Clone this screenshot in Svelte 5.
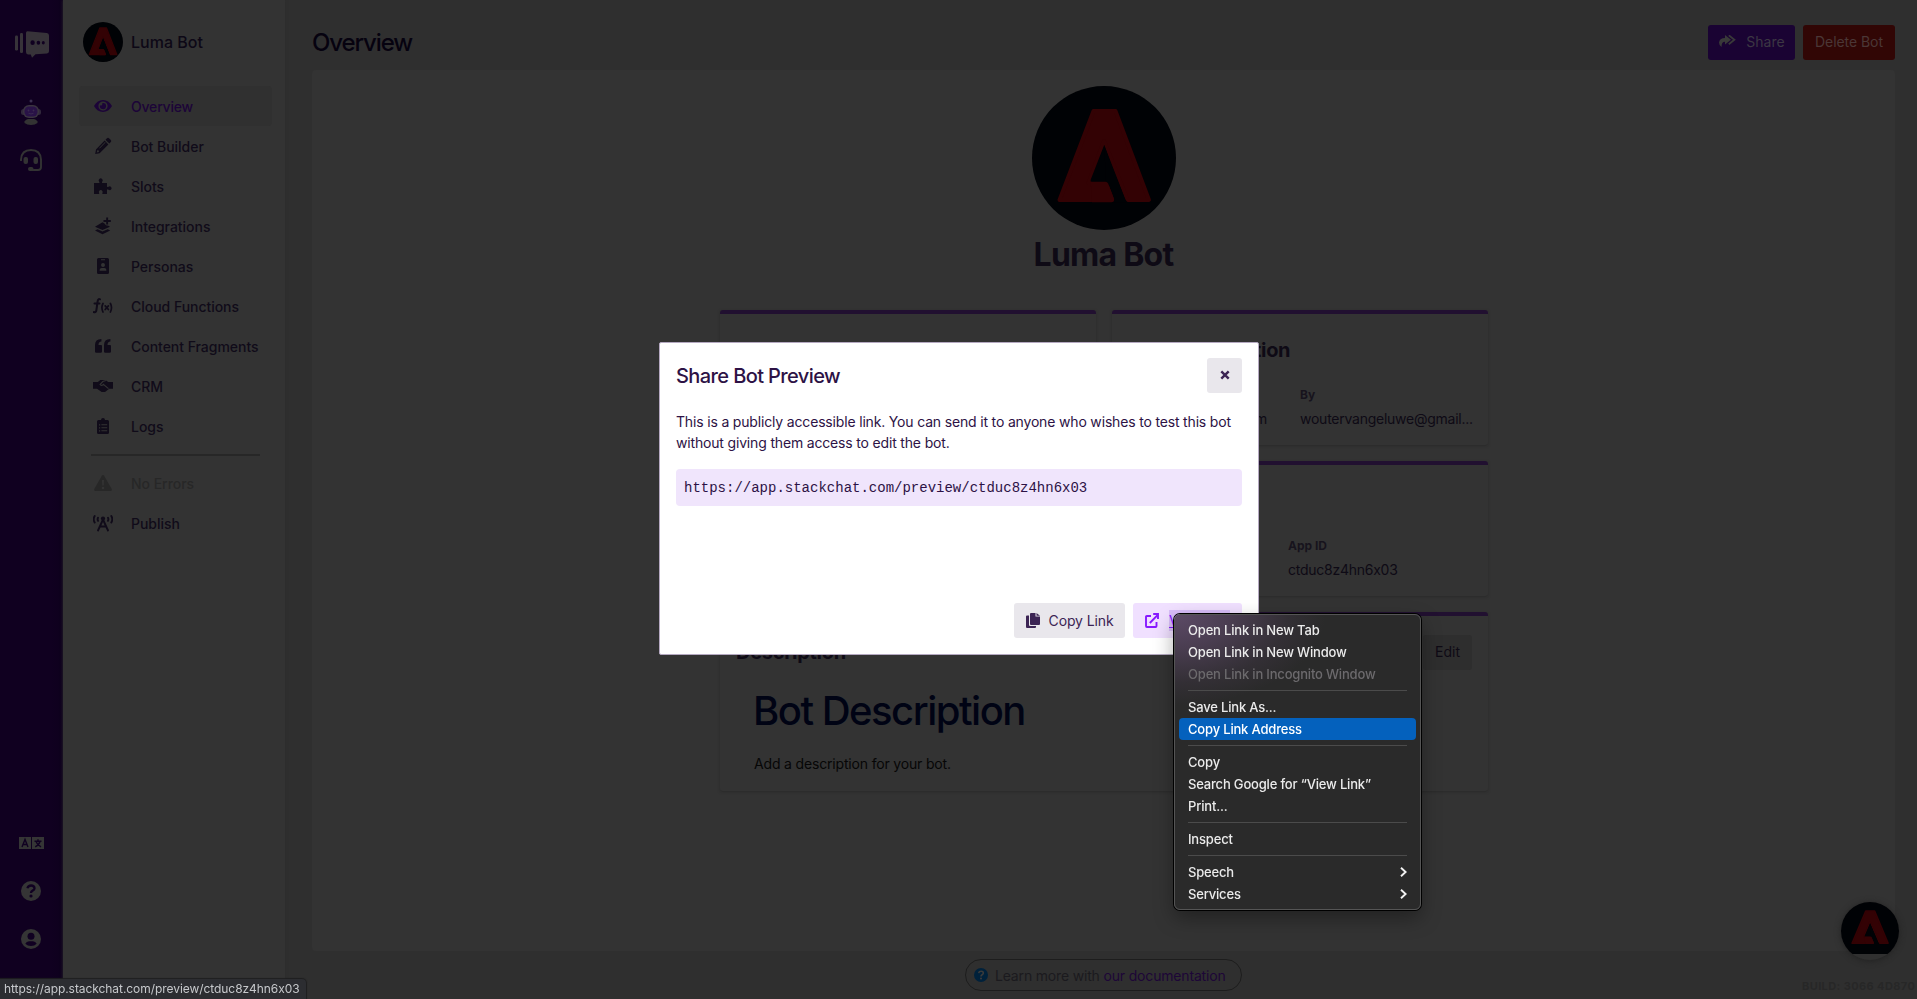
<script>
  const nav = [
    { icon: 'eye', label: 'Overview', active: true },
    { icon: 'pencil', label: 'Bot Builder' },
    { icon: 'puzzle', label: 'Slots' },
    { icon: 'layers', label: 'Integrations' },
    { icon: 'badge', label: 'Personas' },
    { icon: 'fx', label: 'Cloud Functions' },
    { icon: 'quote', label: 'Content Fragments' },
    { icon: 'handshake', label: 'CRM' },
    { icon: 'clipboard', label: 'Logs' }
  ];
  const navBottom = [
    { icon: 'warning', label: 'No Errors', muted: true },
    { icon: 'tower', label: 'Publish' }
  ];
  const menu = [
    [{ t: 'Open Link in New Tab' }, { t: 'Open Link in New Window' }, { t: 'Open Link in Incognito Window', off: true }],
    [{ t: 'Save Link As...' }, { t: 'Copy Link Address', on: true }],
    [{ t: 'Copy' }, { t: 'Search Google for “View Link”' }, { t: 'Print...' }],
    [{ t: 'Inspect' }],
    [{ t: 'Speech', sub: true }, { t: 'Services', sub: true }]
  ];
</script>

{#snippet logo(box, cls)}
  <svg class={cls} viewBox={box} preserveAspectRatio="none">
    <path d="M61.5 25H83.5L117 114H95.5L72 55L56.6 97H74.5L80.5 114H27.5Z" fill="#330204" stroke="#330204" stroke-width="4" stroke-linejoin="round" />
    <path d="M72.2 59L58.6 94Q58.2 95.8 60 96H72L90 109Z" fill="#000205" />
    <path d="M74 96Q75.5 96 76.2 97.6L82 113Q82.6 116 79.6 116.2H96Q94.4 116 93.4 113.6L72.2 59Z" fill="#000205" />
    <path d="M58.7 95.8H73.5Q75.4 96 76.1 97.6L82 112.6Q82.8 116 79.6 116.2H60Z" fill="#330204" />
  </svg>
{/snippet}

{#snippet icon(name)}
  <svg class="ico" viewBox="0 0 20 20" fill="currentColor">
    {#if name === 'eye'}
      <path fill-rule="evenodd" d="M1 10C3 6.200 6.300 4 10 4s7 2.200 9 6c-2 3.800-5.300 6-9 6s-7-2.200-9-6ZM10 5.400a4.600 4.600 0 1 0 0 9.200a4.600 4.600 0 0 0 0-9.200ZM10 6.900a3.100 3.100 0 1 1-3 2.300a1.600 1.600 0 0 0 2.200-2.200a3 3 0 0 1 .8-.1Z" />
    {:else if name === 'pencil'}
      <path fill-rule="evenodd" d="M11.600 4.600L15.400 8.400L6.600 17.200L2.200 18L3 13.600ZM4.200 14.300L3.800 16.400L5.900 16L5.800 14.500ZM12 6.100L6.200 11.900l.5.5l5.800-5.800Z" />
      <path d="M12.500 3.700l1.500-1.500q1-.9 2 0l1.800 1.800q.9 1 0 2l-1.500 1.500Z" />
    {:else if name === 'puzzle'}
      <path d="M1 7H6.300Q6.800 6.700 6.200 5.700A2 2 0 1 1 9.200 5.700Q8.600 6.700 9.200 7H14V10.500Q14.400 11.500 15.500 10.700A1.900 1.900 0 1 1 15.500 13.700Q14.400 12.900 14 13.900V18H9.500Q9 17.600 9.500 16.700A1.900 1.900 0 1 0 6 16.700Q6.600 17.600 6 18H1Z" />
    {:else if name === 'layers'}
      <path d="M2 10.700L9.500 6.300L11.500 7.400Q12.500 9.600 15.400 9.700L17 10.700L9.500 14Z" />
      <path d="M2 14.500L4.500 13.200L9.500 15.400L14.700 13.200L17.200 14.500L9.500 18.200Z" />
      <path d="M13.200 1.500h1.900v2.600h2.700v1.900h-2.700v2.600h-1.900V6h-2.700V4.100h2.700Z" />
    {:else if name === 'badge'}
      <path fill-rule="evenodd" d="M5.500 2h9Q16 2 16 3.500v13Q16 18 14.500 18h-9Q4 18 4 16.500v-13Q4 2 5.500 2ZM8 3.300v1h4v-1ZM10 7a2 2 0 1 0 0 4a2 2 0 0 0 0-4ZM6.600 14.800h6.800q0-2.800-2-2.800H8.600q-2 0-2 2.800Z" />
    {:else if name === 'fx'}
      <g fill="none" stroke="currentColor" stroke-width="2" stroke-linecap="round">
        <path d="M.8 16Q3 17 3.400 14L4.600 5.500Q5 2.400 7 3.300M1.500 7.600H6.500" />
        <path d="M10 7.500Q7.800 11.500 10 16M17.400 7.500Q19.600 11.500 17.400 16M12.200 9.900l3.200 3.600M15.400 9.900l-3.200 3.600" stroke-width="1.700" />
      </g>
    {:else if name === 'quote'}
      <path d="M8.400 3v2.500Q5.500 5.500 5.500 9H8q1 0 1 1v5.500q0 1.300-1.300 1.300H3.300Q2 16.800 2 15.500V9Q2 3 8.400 3Z" />
      <path d="M17.400 3v2.500Q14.500 5.500 14.500 9H17q1 0 1 1v5.500q0 1.300-1.300 1.300h-4.400Q11 16.800 11 15.500V9Q11 3 17.400 3Z" />
    {:else if name === 'handshake'}
      <path d="M0 6h4.800l2.600-2h5l2.800 2H20v6.700h-3.800L12 16H8.700L4 12.700H0Z" />
      <path d="M12.900 4.500L9.800 5.500L7 8.500Q8.300 10.300 10.300 8.300L15.500 12.600" fill="none" stroke="#333" stroke-width="1.100" />
    {:else if name === 'clipboard'}
      <path fill-rule="evenodd" d="M5.500 4H8Q8 2 10 2t2 2h2.500Q16 4 16 5.500v11q0 1.500-1.500 1.500h-9Q4 18 4 16.500v-11Q4 4 5.500 4ZM6 8.200v1.200h1.200V8.200ZM8.400 8.200v1h5.800v-1ZM6 11.200v1.200h1.200v-1.200ZM8.400 11.300v1h5.800v-1ZM6 14.200v1.200h1.200v-1.200ZM8.400 14.300v1h5.800v-1Z" />
    {:else if name === 'warning'}
      <path fill-rule="evenodd" d="M8.900 2.700q1.100-1.600 2.200 0l7.600 13.200q.8 2-1.200 2.100h-15q-2-.1-1.200-2.100ZM9 7l.3 5.500h1.400L11 7ZM10 13.700a1.300 1.300 0 1 0 0 2.600a1.300 1.300 0 0 0 0-2.600Z" />
    {:else if name === 'tower'}
      <g fill="none" stroke="currentColor" stroke-width="1.900" stroke-linecap="round">
        <path d="M5 17.500L10 6.500L15 17.500M6.800 13.500H13.200" />
        <path d="M1.700 3Q-.3 6.200 1.700 9.500M18.300 3Q20.300 6.200 18.300 9.500M5 4.800Q4.200 6.300 5 7.800M15 4.800Q15.800 6.300 15 7.800" />
      </g>
      <circle cx="10" cy="5.500" r="2.100" />
    {/if}
  </svg>
{/snippet}

<div class="app">
  <aside class="rail">
    <svg class="brand" width="34" height="27" viewBox="0 0 34 27" fill="#373339">
      <rect x="0" y="4.500" width="3" height="15" rx="1.200" />
      <rect x="5" y="2" width="3" height="20" rx="1.200" />
      <path fill-rule="evenodd" d="M12.500.2L31.800 2Q34 2.300 34 4.500v15.700Q34 22.200 32 22.500L20.500 23.200L17 26.700L15.800 23.600L13 23.400Q11 23.200 11 21V2Q11 .1 12.500.2ZM17.600 9.300a2.200 2.400 0 1 0 0 4.800a2.200 2.400 0 0 0 0-4.800ZM23.400 9.800a1.800 2 0 1 0 0 4a1.800 2 0 0 0 0-4ZM28.300 10a1.500 1.800 0 1 0 0 3.600a1.500 1.800 0 0 0 0-3.600Z" />
    </svg>
    <svg class="bot" width="20" height="27" viewBox="0 0 20 27">
      <circle cx="10" cy="2" r="1.500" fill="#3b3050" />
      <rect x="0" y="10" width="20" height="6" rx="2.500" fill="#31283b" />
      <rect x="2" y="6" width="16" height="13" rx="6" fill="#3a343f" />
      <rect x="3.500" y="7.500" width="13" height="10" rx="4.500" fill="#291247" />
      <circle cx="7.500" cy="11.500" r=".9" fill="#3a2a50" /><circle cx="12.500" cy="11.500" r=".9" fill="#3a2a50" />
      <path d="M7.500 14.300q2.500 1.300 5 0" fill="none" stroke="#3a2a50" />
      <path d="M3.500 22.500Q5 20 7 20h6q2 0 3.500 2.500v1.500Q14 26 10 26T3.500 24Z" fill="#333333" />
    </svg>
    <svg class="headset" width="22" height="22" viewBox="0 0 22 22">
      <path d="M1 12V10.500Q1.500 1 11 1T21 10.500V18Q21 21 18 21H11" fill="none" stroke="#333" stroke-width="1.900" />
      <rect x="3.500" y="8" width="4.500" height="7" rx="2" fill="#333" /><rect x="13.500" y="8" width="4.500" height="7" rx="2" fill="#333" />
      <rect x="8" y="18" width="5.500" height="4" rx="2" fill="#333" />
    </svg>
    <div class="railBottom">
      <svg width="25" height="12" viewBox="0 0 25 12">
        <rect width="12" height="12" fill="#353535" /><rect x="13" width="12" height="12" fill="#353535" />
        <path d="M3 10L6 2.500L9 10M4 7.500h4M15.500 4.200h7M19 2.200v2M21 4.500Q19.800 8.300 16.200 9.800M17.200 5Q18.300 8 22 9.800" fill="none" stroke="#100021" stroke-width="1.400" />
      </svg>
      <svg width="20" height="20" viewBox="0 0 20 20">
        <circle cx="10" cy="10" r="10" fill="#353535" />
        <path d="M6.400 7.300Q7.200 4.500 10.200 4.500T13.500 7.200Q13.500 8.700 11.600 9.600Q10 10.400 10 12" fill="none" stroke="#100021" stroke-width="2.300" />
        <circle cx="10" cy="15" r="1.600" fill="#100021" />
      </svg>
      <svg width="20" height="20" viewBox="0 0 20 20">
        <circle cx="10" cy="10" r="10" fill="#353535" />
        <circle cx="10" cy="7.200" r="3.500" fill="#100021" />
        <path d="M4.300 14.700Q5.500 12.200 8 12.200h4q2.500 0 3.700 2.500Q13.500 17 10 17t-5.700-2.300Z" fill="#100021" />
      </svg>
    </div>
  </aside>

  <nav class="side">
    <div class="who">
      <div class="avatar small">{@render logo('7 5 130 134', 'fill')}</div>
      <span>Luma Bot</span>
    </div>
    {#each nav as n}
      <div class="item" class:active={n.active}>{@render icon(n.icon)}<span>{n.label}</span></div>
    {/each}
    <hr />
    {#each navBottom as n}
      <div class="item" class:muted={n.muted}>{@render icon(n.icon)}<span>{n.label}</span></div>
    {/each}
  </nav>

  <main>
    <header>
      <h1>Overview</h1>
      <div class="actions">
        <button class="share">
          <svg width="17" height="13" viewBox="0 0 17 13" fill="#393939">
            <path d="M6 0L12 4.700L6 9.500V6.700Q2.500 6.600 2.500 12Q0 10.500 0 7.500Q.3 3 6 2.900Z" />
            <path d="M9.800.3L15.400 4.800L9.800 9.300" fill="none" stroke="#393939" stroke-width="1.800" />
          </svg>
          Share
        </button>
        <button class="delete">Delete Bot</button>
      </div>
    </header>

    <section class="panel">
      <div class="avatar big">{@render logo('0 0 144 144', 'fill')}</div>
      <h2>Luma Bot</h2>
      <div class="cards">
        <div class="card"></div>
        <div class="card">
          <h3 class="pubTitle">Last Publication</h3>
          <div class="cols">
            <div><p class="end">pm</p></div>
            <div><b>By</b><p>woutervangeluwe@gmail...</p></div>
          </div>
        </div>
        <div class="card wide ids">
          <div><b>App ID</b><p>ctduc8z4hn6x03</p></div>
        </div>
        <div class="card wide desc">
          <div class="descHead"><h3>Description</h3><button class="edit">Edit</button></div>
          <h4>Bot Description</h4>
          <p>Add a description for your bot.</p>
        </div>
      </div>
    </section>

    <footer>
      <div class="pill">
        <svg width="14" height="14" viewBox="0 0 20 20">
          <circle cx="10" cy="10" r="10" fill="#00213b" />
          <path d="M6.600 7.300Q7.200 4.700 10.200 4.700T13.400 7.200Q13.400 8.700 11.600 9.600Q10 10.400 10 12" fill="none" stroke="#3b3b3b" stroke-width="2.200" />
          <circle cx="10" cy="15" r="1.500" fill="#3b3b3b" />
        </svg>
        <span>Learn more with <a href="#docs">our documentation</a></span>
      </div>
    </footer>
  </main>
</div>

<div class="build">BUILD: 3066 4D870</div>
<div class="widget">{@render logo('0 0 144 144', 'widgetArt')}</div>

<div class="backdrop">
  <div class="modal">
    <div class="modalHead">
      <h5>Share Bot Preview</h5>
      <button class="close" aria-label="Close">
        <svg width="10" height="10" viewBox="0 0 10 10"><path d="M1.300 1.300L8.700 8.700M8.700 1.300L1.300 8.700" stroke="#3c2454" stroke-width="2.400" /></svg>
      </button>
    </div>
    <p>This is a publicly accessible link. You can send it to anyone who wishes to test this bot without giving them access to edit the bot.</p>
    <code>https://app.stackchat.com/preview/ctduc8z4hn6x03</code>
    <div class="modalFoot">
      <button class="copy">
        <svg width="14" height="15" viewBox="0 0 14 15" fill="#3c2454">
          <path d="M5 0h4.500v3.500H14V11q0 1-1 1H5q-1 0-1-1V1q0-1 1-1Z" /><path d="M10.500 0L14 2.700H10.500Z" />
          <path d="M0 3.500Q0 2.500 1 2.500h2V12q0 1 1 1h6v1q0 1-1 1H1q-1 0-1-1Z" />
        </svg>
        Copy Link
      </button>
      <button class="view">
        <svg width="14" height="15" viewBox="0 0 14 15" fill="none" stroke="#8719ff" stroke-width="1.900">
          <path d="M6 3H1.900Q1 3 1 3.900V13q0 1 .9 1H10.600q.9 0 .9-1V9M4.800 10L12.300 2.300" /><path d="M8.200 1H13V6" />
        </svg>
        <span>View Link</span>
      </button>
    </div>
  </div>
</div>

<div class="ctx">
  {#each menu as group}
    <div class="group">
      {#each group as m}
        <div class="row" class:off={m.off} class:on={m.on}>
          {m.t}
          {#if m.sub}<svg width="7" height="10" viewBox="0 0 7 10"><path d="M1 .8L5.600 5L1 9.200" fill="none" stroke="#f2f2f2" stroke-width="1.900" /></svg>{/if}
        </div>
      {/each}
    </div>
  {/each}
</div>

<div class="status">https://app.stackchat.com/preview/ctduc8z4hn6x03</div>

<style>
  :global(body) { background: #2f2f2f; font-family: Inter, sans-serif; font-size: 14px; font-feature-settings: "calt" 0; overflow: hidden; }
  * { box-sizing: border-box; }
  h1, h2, h3, h4, h5, p { margin: 0; }
  button { border: 0; font: inherit; height: 35px; border-radius: 3px; padding: 0 0 2px; display: flex; align-items: center; justify-content: center; }
  .app { display: flex; height: 999px; width: 1917px; }

  .rail { width: 63px; flex: none; background: linear-gradient(90deg, #100020 80%, #0e001d); display: flex; flex-direction: column; align-items: center; padding: 31px 2px 50px 0; }
  .brand { margin-left: 2px; }
  .bot { margin-top: 41px; }
  .headset { margin-top: 23px; }
  .railBottom { margin-top: auto; display: flex; flex-direction: column; align-items: center; gap: 28px; }
  .railBottom svg:first-child { margin: 0 0 4px 2px; }

  .side { width: 222px; flex: none; background: #333; padding: 22px 13px 0 16px; margin-right: 1px; box-shadow: 0 0 3px #2c2c2c; }
  .who { display: flex; align-items: center; gap: 8px; padding-left: 4px; margin-bottom: 24px; height: 40px; font-size: 16px; font-weight: 500; color: #0d0816; }
  .avatar { border-radius: 50%; background: #000205; overflow: hidden; }
  .small { width: 40px; height: 40px; }
  .big { width: 144px; height: 144px; }
  :global(svg.fill) { display: block; width: 100%; height: 100%; }
  .item { height: 40px; border-radius: 4px; display: flex; align-items: center; gap: 18px; padding-left: 14px; font-weight: 500; color: #100b19; letter-spacing: -0.03px; }
  .ico { width: 20px; height: 20px; flex: none; margin-top: -1px; }
  .active { background: #303030; color: #1c0438; letter-spacing: -0.2px; }
  .muted { color: #272727; }
  hr { border: 0; height: 2px; background: #272727; margin: 8px 12px 7px; }

  main { flex: 1; min-width: 0; display: flex; flex-direction: column; padding: 0 22px 0 26px; }
  header { height: 70px; flex: none; display: flex; justify-content: space-between; align-items: flex-start; padding-top: 25px; }
  h1 { font-size: 24px; font-weight: 500; line-height: 35px; color: #06020f; letter-spacing: -1.1px; }
  .actions { display: flex; gap: 8px; }
  .share { width: 87px; background: #1a0333; color: #3c3743; gap: 10px; padding-left: 1px; }
  .delete { width: 92px; background: #310605; color: #4b3736; letter-spacing: -0.05px; }
  .panel { height: 881px; flex: none; background: #333; border-radius: 4px; display: flex; flex-direction: column; align-items: center; padding-top: 16px; }
  h2 { font-size: 32px; font-weight: 700; line-height: 48px; margin-top: 1px; color: #0e0a15; letter-spacing: -0.75px; }
  .cards { width: 768px; margin: 31px 0 0 1px; display: grid; grid-template-columns: repeat(2, minmax(0, 1fr)); grid-template-rows: 135px 135px 179px; gap: 16px; }
  .card { border-top: 4px solid #211030; border-radius: 3px; box-shadow: 0 1px 3px #292929; padding: 24px 16px 0; color: #0e0a15; }
  .wide { grid-column: 1 / 3; }
  h3 { font-size: 20px; font-weight: 700; line-height: 24px; letter-spacing: -0.3px; }
  .pubTitle { word-spacing: 11px; white-space: nowrap; }
  .cols { display: flex; gap: 33px; margin-top: 23px; }
  .cols > div { width: 139px; flex: none; }
  .cols > div + div { width: 174px; }
  b { display: block; font-size: 12px; font-weight: 700; line-height: 20px; color: #17131d; }
  .card p { font-size: 14px; line-height: 20px; margin-top: 4px; letter-spacing: -0.25px; }
  .cols .end { text-align: right; margin-top: 24px; }
  .ids { padding: 71px 0 0 568px; }
  .desc { padding-top: 19px; }
  .descHead { display: flex; justify-content: space-between; }
  .descHead h3 { line-height: 35px; }
  .edit { width: 49px; background: #2e2e2e; color: #0e0a15; }
  h4 { font-size: 40px; font-weight: 500; line-height: 48px; letter-spacing: -1.5px; color: #000314; margin: 17px 0 0 17px; }
  .desc p { margin: 19px 0 0 18px; color: #060606; letter-spacing: -0.17px; }

  footer { display: flex; justify-content: center; padding-top: 8px; }
  .pill { width: 277px; height: 32px; border: 1px solid #1d1d1d; border-radius: 16px; display: flex; align-items: center; gap: 7px; padding-left: 8px; color: #1b1a1e; white-space: nowrap; letter-spacing: -0.17px; }
  .pill span { padding-top: 1px; }
  .pill a { color: #1d0637; text-decoration: none; }
  .build { position: absolute; left: 1802px; top: 979px; width: 115px; font-size: 11px; font-weight: 700; line-height: 14px; color: #272727; white-space: nowrap; overflow: hidden; letter-spacing: 0.4px; }
  .widget { position: absolute; left: 1841px; top: 902px; width: 58px; height: 58px; border-radius: 50%; overflow: hidden; background: #303030; box-shadow: 0 1px 6px #222; }
  :global(svg.widgetArt) { display: block; width: 58px; height: 52px; background: #000205; }

  .backdrop { position: fixed; inset: 0; display: flex; align-items: center; justify-content: center; padding: 0 0 2px 1px; }
  .modal { width: 600px; height: 313px; background: #fff; border: 1px solid #b5a9c1; border-radius: 2px; padding: 15px 16px 16px; display: flex; flex-direction: column; color: #2d1245; }
  .modalHead { display: flex; justify-content: space-between; height: 35px; }
  h5 { font-size: 20px; font-weight: 500; line-height: 37px; letter-spacing: -0.6px; }
  .close { width: 35px; background: #e9e7ec; }
  .modal p { line-height: 21px; margin-top: 18px; letter-spacing: -0.17px; }
  code { display: block; height: 37px; margin-top: 16px; border-radius: 4px; background: #f0e5fc; padding: 0 8px; line-height: 38px; font-family: "Courier", "Liberation Mono", monospace; font-size: 14px; }
  .modalFoot { margin-top: auto; display: flex; justify-content: flex-end; gap: 8px; }
  .modalFoot button { padding-bottom: 0; }
  .copy { width: 111px; background: #e9e7ec; color: #3c2454; gap: 9px; letter-spacing: -0.12px; }
  .view { width: 109px; background: #f0e0ff; color: #8719ff; gap: 10px; letter-spacing: -0.3px; }
  .view span { background: #d8bdf8; text-decoration: underline; line-height: 21px; }

  .ctx { position: absolute; left: 1174px; top: 614px; width: 247px; height: 296px; border-radius: 6px; border: 1px solid #555; box-shadow: 0 0 0 1px #000, 0 8px 20px rgba(0, 0, 0, 0.35); background: radial-gradient(ellipse 150px 90px at 0 0, #5c4a66 0%, #4b3e52 35%, #332f35 75%, #2a2a2a 100%); padding: 4px 4px; font-size: 13px; font-weight: 500; color: #ebebeb; }
  .group + .group { margin-top: 5px; padding-top: 5px; position: relative; border-top: 1px solid transparent; }
  .group + .group::before { content: ''; position: absolute; left: 9px; right: 9px; top: -1px; height: 1px; background: #4b4b4b; }
  .row { height: 22px; padding: 0 9px; border-radius: 4px; display: flex; align-items: center; justify-content: space-between; letter-spacing: -0.18px; white-space: nowrap; }
  .off { color: #6c6a6d; }
  .on { background: #0461bd; color: #fff; }

  .status { position: absolute; left: 0; top: 979px; width: 306px; height: 20px; background: #2c2d31; box-shadow: 0 0 1px 1px #1f1f20; border-top-right-radius: 4px; padding-left: 4px; font-size: 12px; line-height: 19px; color: #c6c8cb; white-space: nowrap; letter-spacing: -0.06px; }
</style>
